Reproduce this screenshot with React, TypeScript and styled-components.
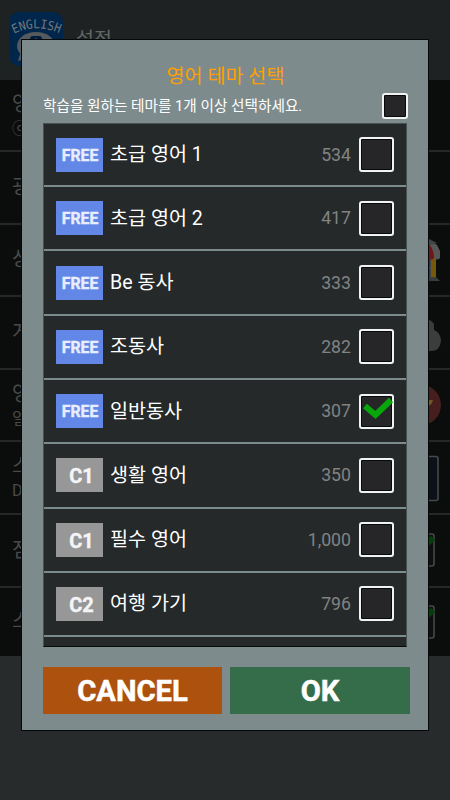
import React from "react";
import styled, { createGlobalStyle } from "styled-components";

const GlobalStyle = createGlobalStyle`
  * { box-sizing: border-box; }
  body {
    margin: 0;
    background: #272b2c;
    font-family: Roboto, "Noto Sans CJK KR", sans-serif;
  }
`;

const Screen = styled.div`
  position: relative;
  width: 450px;
  height: 800px;
  overflow: hidden;
  background: #272b2c;
`;

const Header = styled.header`
  display: flex;
  align-items: center;
  gap: 13px;
  height: 80px;
  padding: 0 9px 2px;
  background: #1e2223;
`;

const AppLogo = styled.svg`
  flex: none;
  width: 54px;
  height: 54px;
  overflow: visible;
`;

const HeaderTitle = styled.h1`
  margin: -3px 0 0;
  color: #646666;
  font-size: 19.5px;
  font-weight: 400;
`;

const Settings = styled.div`
  height: 576px;
  background: #0b0d0c;
`;

const SettingRow = styled.div`
  display: flex;
  align-items: center;
  justify-content: space-between;
  height: 72.6px;
  padding-left: 12px;
  border-bottom: 2px solid #252827;
  &:first-child { height: 72px; }
  &:last-child { height: 68.4px; border-bottom: 0; }
`;

const SettingText = styled.div`
  color: #484a49;
  font-size: 20px;
  line-height: 27px;
  white-space: nowrap;
`;

const SettingNote = styled.div`
  font-size: 16px;
  line-height: 22px;
`;

const SettingIcon = styled.svg`
  flex: none;
  width: 50px;
  height: 50px;
`;

const Dialog = styled.section`
  position: absolute;
  left: 22px;
  top: 40px;
  width: 406px;
  height: 690px;
  display: flex;
  flex-direction: column;
  padding: 20px 19px 15px 21px;
  background: #7e8b8c;
  box-shadow: 0 0 0 1px #060909;
`;

const DialogTitle = styled.h2`
  height: 32px;
  margin: 0;
  padding-right: 1px;
  color: #ff9f05;
  font-size: 19.6px;
  font-weight: 400;
  line-height: 33px;
  text-align: center;
`;

const Instruction = styled.div`
  display: flex;
  align-items: center;
  justify-content: space-between;
  height: 31px;
  padding: 0 1px 3px 0;
  color: #fff;
  font-size: 14.65px;
  line-height: 28px;
  white-space: nowrap;
`;

const Box = styled.span<{ $size: number }>`
  flex: none;
  width: ${(p) => p.$size}px;
  height: ${(p) => p.$size}px;
  border: 2px solid #f1f3f3;
  border-radius: 3px;
  background: #262528;
  box-shadow: inset 0 0 0 1px #08090a;
`;

const Mark = styled.svg`
  display: block;
  width: 30px;
  height: 30px;
  overflow: visible;
`;

const ThemeList = styled.ul`
  width: 364px;
  height: 524px;
  margin: 0;
  padding: 0;
  overflow: hidden;
  list-style: none;
  background: #252929;
  border-left: 1px solid #465151;
  border-right: 1px solid #465151;
  border-top: 1px solid #465151;
  border-bottom: 1px solid #080a0a;
`;

const ThemeRow = styled.li`
  display: flex;
  align-items: center;
  height: 64.28px;
  padding: 0 12px;
  border-bottom: 2px solid #7b8b8c;
  &:first-child { height: 63.2px; }
`;

const Badge = styled.span<{ $free: boolean }>`
  width: 47px;
  height: 34px;
  margin-right: 7px;
  padding-left: ${(p) => (p.$free ? 1 : 4)}px;
  background: ${(p) => (p.$free ? "#6387e7" : "#979797")};
  color: ${(p) => (p.$free ? "#e7eeff" : "#f5f5f5")};
  font-size: ${(p) => (p.$free ? 15.8 : 20)}px;
  font-weight: 700;
  line-height: 36px;
  text-align: center;
  -webkit-text-stroke: 0.4px currentColor;
`;

const ThemeName = styled.span`
  flex: 1;
  padding-top: 1px;
  color: #fff;
  font-size: 19.6px;
  line-height: 30px;
`;

const Count = styled.span`
  margin-right: 8px;
  color: #818383;
  font-size: 17.7px;
`;

const Actions = styled.div`
  display: grid;
  grid-template-columns: 179px 180px;
  gap: 8px;
  width: 367px;
  margin-top: 20px;
`;

const ActionButton = styled.button<{ $color: string }>`
  height: 47px;
  padding: 1px 0 0;
  border: 0;
  background: ${(p) => p.$color};
  color: #fff;
  font-family: Roboto, sans-serif;
  font-size: 29.2px;
  font-weight: 700;
  line-height: 46px;
  -webkit-text-stroke: 0.5px #fff;
`;

const themes = [
  { tag: "FREE", name: "초급 영어 1", count: "534" },
  { tag: "FREE", name: "초급 영어 2", count: "417" },
  { tag: "FREE", name: "Be 동사", count: "333" },
  { tag: "FREE", name: "조동사", count: "282" },
  { tag: "FREE", name: "일반동사", count: "307", checked: true },
  { tag: "C1", name: "생활 영어", count: "350" },
  { tag: "C1", name: "필수 영어", count: "1,000" },
  { tag: "C2", name: "여행 가기", count: "796" },
];

const ShopIcon = () => (
  <SettingIcon viewBox="0 0 50 50">
    <path d="M10 22H36V44H10Z" fill="#765809" />
    <path d="M19 23H31V43H19Z" fill="#3f4650" />
    <path d="M19 24H30V32H19ZM19 34H30V42H19Z" fill="#173565" />
    <path d="M10 5H29L37 10L40 16V23Q37 26 34 23L29 11H10Z" fill="#565857" />
    <path d="M22 9L29 9Q34 15 34 23Q31 27 27 22Q24 26 20 22Z" fill="#6e1716" />
    <path d="M8 43L36 42L40 46H8Z" fill="#393c3c" />
    <path d="M15 5L29 4L37 8L30 10H15Z" fill="#414545" />
  </SettingIcon>
);

const CloudIcon = () => (
  <SettingIcon viewBox="0 0 50 50">
    <path d="M13 26C13 10 29 9 34 17V23Q41 26 41 34Q40 44 31 44H13Z" fill="#3b3d3d" />
  </SettingIcon>
);

const MedalIcon = () => (
  <SettingIcon viewBox="0 0 50 50">
    <circle cx="20.5" cy="25" r="20.5" fill="#451e1d" />
    <path d="M10 20H33Q32 25 28 26Q23 31 17 31Z" fill="#74561f" />
  </SettingIcon>
);

const PanelIcon = () => (
  <SettingIcon viewBox="0 0 50 50">
    <rect x="1" y="3.5" width="37" height="44" rx="2" fill="#0c1018" stroke="#464849" strokeWidth="1.6" />
  </SettingIcon>
);

const ToggleIcon = () => (
  <SettingIcon viewBox="0 0 50 50">
    <rect x="3" y="9" width="31" height="32" rx="2" fill="#100e11" stroke="#464849" strokeWidth="1.6" />
    <path d="M12 18L20 25L33 13" fill="none" stroke="#063e09" strokeWidth="6" />
  </SettingIcon>
);

const settings = [
  { label: "영", note: "ⓞ", icon: null },
  { label: "광", icon: null },
  { label: "상", icon: <ShopIcon /> },
  { label: "게", icon: <CloudIcon /> },
  { label: "영", note: "일", icon: <MedalIcon /> },
  { label: "스", note: "D", icon: <PanelIcon /> },
  { label: "점", icon: <ToggleIcon /> },
  { label: "스", icon: <ToggleIcon /> },
];

export default function App() {
  return (
    <Screen>
      <GlobalStyle />
      <Header>
        <AppLogo viewBox="0 0 54 54">
          <defs>
            <path id="logo-arc" d="M5 22Q27 10.5 52 22" />
          </defs>
          <rect width="54" height="54" rx="10" fill="#00264b" />
          <ellipse cx="27" cy="34" rx="19" ry="14" fill="#555a5f" />
          <path d="M12 39L9 49L20 46Z" fill="#555a5f" />
          <rect x="21" y="24" width="12" height="14" rx="3" fill="#001c3c" />
          <path d="M24 28H29M27 26V32" stroke="#174b83" strokeWidth="2" />
          <text fill="#74787b" fontFamily="DejaVu Sans Mono, monospace" fontSize="12.5">
            <textPath href="#logo-arc" textLength="47" lengthAdjust="spacingAndGlyphs">
              ENGLISH
            </textPath>
          </text>
        </AppLogo>
        <HeaderTitle>설정</HeaderTitle>
      </Header>
      <Settings>
        {settings.map((s, i) => (
          <SettingRow key={i}>
            <SettingText>
              {s.label}
              {s.note && <SettingNote>{s.note}</SettingNote>}
            </SettingText>
            {s.icon}
          </SettingRow>
        ))}
      </Settings>
      <Dialog>
        <DialogTitle>영어 테마 선택</DialogTitle>
        <Instruction>
          학습을 원하는 테마를 1개 이상 선택하세요.
          <Box $size={26} />
        </Instruction>
        <ThemeList>
          {themes.map((t) => (
            <ThemeRow key={t.name}>
              <Badge $free={t.tag === "FREE"}>{t.tag}</Badge>
              <ThemeName>{t.name}</ThemeName>
              <Count>{t.count}</Count>
              <Box $size={35}>
                {t.checked && (
                  <Mark viewBox="0 0 30 30">
                    <path d="M4 10L14.5 19L30 4" fill="none" stroke="#08a60b" strokeWidth="6" />
                  </Mark>
                )}
              </Box>
            </ThemeRow>
          ))}
        </ThemeList>
        <Actions>
          <ActionButton $color="#ad510e">CANCEL</ActionButton>
          <ActionButton $color="#356d4a">OK</ActionButton>
        </Actions>
      </Dialog>
    </Screen>
  );
}
